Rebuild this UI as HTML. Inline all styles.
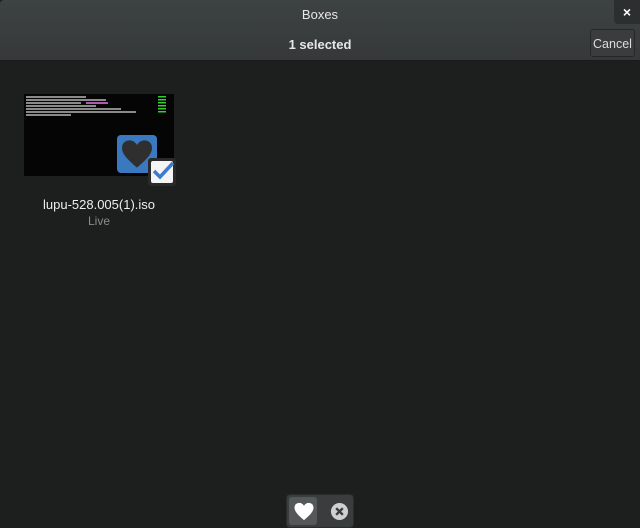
<html><head><style>
body{margin:0;width:640px;height:526px;background:#1d1e1e;font-family:"Liberation Sans",sans-serif;position:relative;overflow:hidden}
.hdr{position:absolute;left:0;top:0;width:640px;height:60px;background:linear-gradient(#3d4242,#353939);border-bottom:1px solid #1a1b1b;border-radius:4px 4px 0 0}
.t{position:absolute;width:640px;text-align:center;color:#e6e8e8;font-size:13px}
.x{position:absolute;left:614px;top:0;width:26px;height:24px;background:#2c2f2f;border-radius:0 0 0 4px;color:#fff;font-weight:bold;text-align:center;line-height:24px;font-size:14px}
.cancel{position:absolute;left:590px;top:29px;width:45px;height:28px;border:1px solid #262828;background:#393d3d;border-radius:3px;color:#dcdcdc;font-size:12.5px;text-align:center;line-height:28px;box-sizing:border-box}
.thumb{position:absolute;left:24px;top:94px;width:150px;height:82px;background:#050505}
.ln{position:absolute;left:2px;height:1.5px;background:#8a8a8a}
.tb{position:absolute;left:286px;top:494px;width:68px;height:34px;background:#3a3d3d;border-radius:4px;border:1px solid #2a2c2c;box-sizing:border-box}
</style></head><body>
<div class="hdr"></div>
<div class="t" style="top:7px">Boxes</div>
<div class="t" style="top:37px;font-weight:bold">1 selected</div>
<div class="x">×</div>
<div class="cancel">Cancel</div>
<div class="thumb">
<div class="ln" style="top:2px;width:60px"></div><div class="ln" style="top:5px;width:80px"></div><div class="ln" style="top:8px;width:55px"></div><div class="ln" style="top:11px;width:70px"></div><div class="ln" style="top:14px;width:95px"></div><div class="ln" style="top:17px;width:110px"></div><div class="ln" style="top:20px;width:45px"></div>
<div style="position:absolute;left:62px;top:8px;width:22px;height:1.5px;background:#b05ab0"></div>
<div style="position:absolute;left:134px;top:2px;width:8px;height:17px;background:repeating-linear-gradient(#3c3 0 1.5px,transparent 1.5px 3px)"></div>
</div>
<div style="position:absolute;left:117px;top:135px;width:40px;height:38px;background:#3a78c0;border-radius:4px"></div>
<svg style="position:absolute;left:120px;top:139px" width="34" height="30" viewBox="0 0 24 22"><path d="M12 21 C5 15 1 11 1 6.5 C1 3 3.5 1 6.5 1 C9 1 11 2.5 12 4.5 C13 2.5 15 1 17.5 1 C20.5 1 23 3 23 6.5 C23 11 19 15 12 21Z" fill="#2f2f30"/></svg>
<div style="position:absolute;left:148px;top:158px;width:28px;height:28px;background:#2a2a2a;border-radius:3px"></div>
<div style="position:absolute;left:151px;top:161px;width:22px;height:22px;background:#f4f4f4;border-radius:2px"></div>
<svg style="position:absolute;left:151px;top:159px" width="24" height="22" viewBox="0 0 24 22"><path d="M3 12 L9 18 L22 4" stroke="#3a7cd0" stroke-width="3.5" fill="none"/></svg>
<div style="position:absolute;left:0;width:198px;top:197px;text-align:center;color:#eeeeee;font-size:13px">lupu-528.005(1).iso</div>
<div style="position:absolute;left:0;width:198px;top:214px;text-align:center;color:#8a8c8c;font-size:12px">Live</div>
<div class="tb"><div style="position:absolute;left:2px;top:2px;width:28px;height:28px;background:#545858;border-radius:3px"></div>
<svg style="position:absolute;left:6px;top:7px" width="22" height="19" viewBox="0 0 24 22"><path d="M12 21 C5 15 1 11 1 6.5 C1 3 3.5 1 6.5 1 C9 1 11 2.5 12 4.5 C13 2.5 15 1 17.5 1 C20.5 1 23 3 23 6.5 C23 11 19 15 12 21Z" fill="#fff"/></svg>
<svg style="position:absolute;left:43px;top:7px" width="19" height="19" viewBox="0 0 20 20"><circle cx="10" cy="10" r="9" fill="#d0d0d0"/><path d="M6.5 6.5 L13.5 13.5 M13.5 6.5 L6.5 13.5" stroke="#3a3d3d" stroke-width="2.5"/></svg>
</div>
</body></html>
